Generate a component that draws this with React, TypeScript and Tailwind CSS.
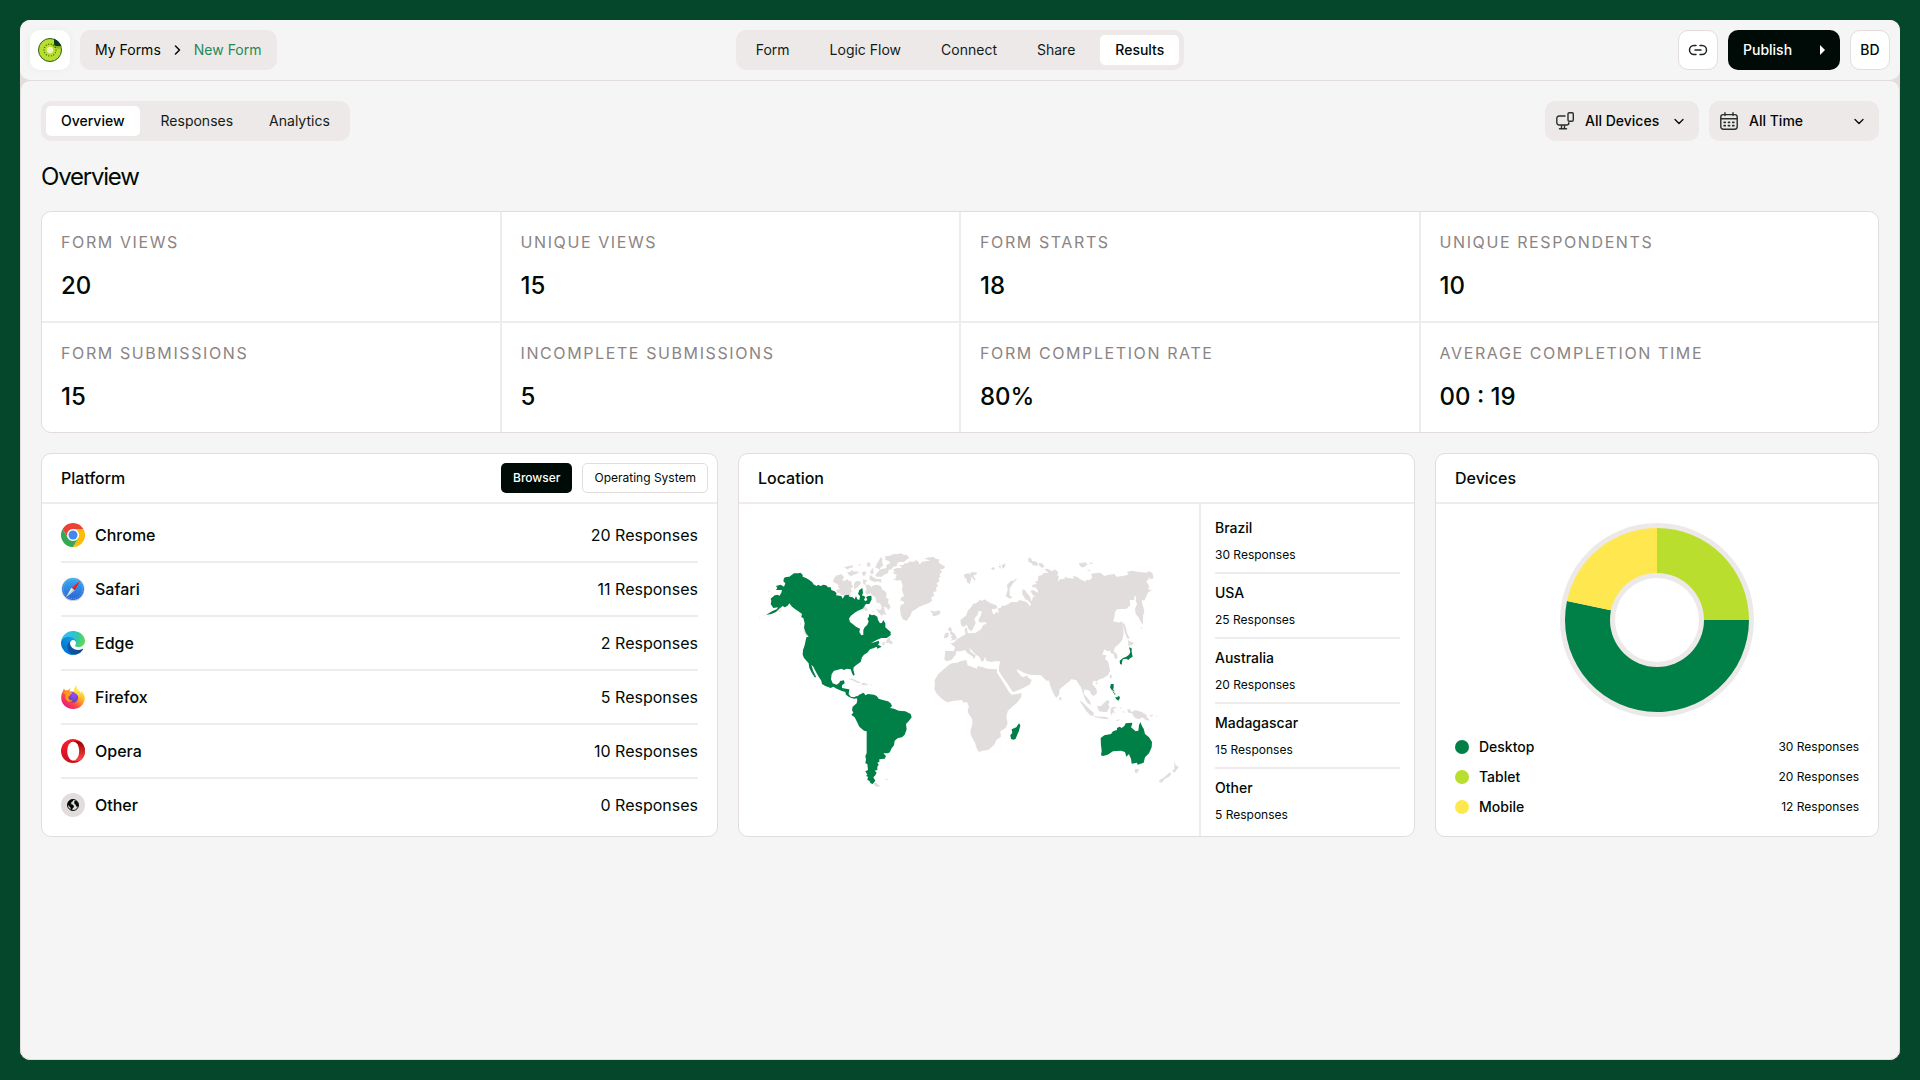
import type { ReactNode } from "react";
import clsx from "clsx";

const DARK = "text-[#000a06]";

function KiwiLogo() {
  const dots = Array.from({ length: 14 }, (_, i) => {
    const a = (i / 14) * Math.PI * 2;
    return { x: 12 + Math.cos(a) * 6, y: 12 + Math.sin(a) * 6 };
  });
  return (
    <svg viewBox="0 0 24 24" className="size-6" aria-hidden="true">
      <circle cx="12" cy="12" r="11.5" fill="#b9de2e" stroke="#2f5d1d" strokeWidth="1" />
      <path d="M16 0.8 A12 12 0 0 1 23.4 8.5 L18 8.2 Q16 8 16 6 Z" fill="#0d3b22" />
      <path d="M16 6 Q16 8 18 8.2 L23.4 8.5 L22 11 L17 10 Q14 9 14.5 6 Z" fill="#8fb91f" />
      {dots.map((d, i) => (
        <circle key={i} cx={d.x} cy={d.y} r="0.7" fill="#3f6b16" />
      ))}
      <circle cx="12" cy="12" r="3.2" fill="#edf5b0" />
    </svg>
  );
}

function Chevron({ className }: { className?: string }) {
  return (
    <svg viewBox="0 0 10 7" className={clsx("h-[7px] w-[10px]", className)} aria-hidden="true">
      <path d="M1 1.5 L5 5.5 L9 1.5" fill="none" stroke="#000a06" strokeWidth="1.3" strokeLinecap="round" strokeLinejoin="round" />
    </svg>
  );
}

function LinkIcon() {
  return (
    <svg viewBox="0 0 20 20" className="size-5" fill="none" stroke="#1d2622" strokeWidth="1.5" strokeLinecap="round" aria-hidden="true">
      <path d="M8 5.5 H6 a4.5 4.5 0 0 0 0 9 H8 M12 5.5 H14 a4.5 4.5 0 0 1 0 9 H12 M7 10 H13" />
    </svg>
  );
}

function DevicesIcon() {
  return (
    <svg viewBox="0 0 18 18" className="h-[18px] w-[18px]" fill="none" stroke="#28302d" strokeWidth="1.4" strokeLinecap="round" strokeLinejoin="round" aria-hidden="true">
      <rect x="12" y="0.7" width="5.3" height="8.6" rx="1.3" />
      <path d="M9 4 H3 a2.2 2.2 0 0 0 -2.2 2.2 V10.8 a2.2 2.2 0 0 0 2.2 2.2 H10.6 a2.2 2.2 0 0 0 2.2 -2.2 V12 M5.5 13 V16 M8.5 13 V16 M3.5 16.8 H10.5" />
    </svg>
  );
}

function CalendarIcon() {
  return (
    <svg viewBox="0 0 18 18" className="h-[18px] w-[18px]" fill="none" stroke="#28302d" strokeWidth="1.4" strokeLinecap="round" strokeLinejoin="round" aria-hidden="true">
      <rect x="0.8" y="2.6" width="16.4" height="14.6" rx="2.4" />
      <path d="M5 0.8 V3.6 M13 0.8 V3.6 M1 6.8 H17" />
      <path d="M4.2 10.3 H5.2 M8.5 10.3 H9.5 M12.8 10.3 H13.8 M4.2 13.7 H5.2 M8.5 13.7 H9.5 M12.8 13.7 H13.8" strokeWidth="1.8" />
    </svg>
  );
}

function ChromeIcon() {
  return (
    <svg viewBox="0 0 48 48" className="size-6" aria-hidden="true">
      <circle cx="24" cy="24" r="12" fill="#fff" />
      <path d="M24,12H44.7812a23.9939,23.9939,0,0,0-41.5639.0029L13.6079,30l.0093-.0024A11.9852,11.9852,0,0,1,24,12Z" fill="#ea4335" />
      <path d="M34.3913,30.0029,24.0007,48A23.994,23.994,0,0,0,44.78,12.0031H23.9989l-.0025.0093A11.985,11.985,0,0,1,34.3913,30.0029Z" fill="#fbbc05" />
      <path d="M13.6086,30.0031,3.218,12.006A23.994,23.994,0,0,0,24.0025,48L34.3931,30.0029l-.0067-.0068a11.9852,11.9852,0,0,1-20.7778.007Z" fill="#34a853" />
      <circle cx="24" cy="24" r="9" fill="#4285f4" />
    </svg>
  );
}

function SafariIcon() {
  return (
    <svg viewBox="0 0 24 24" className="size-6" aria-hidden="true">
      <defs>
        <linearGradient id="safari-bg" x1="0" y1="0" x2="0" y2="1">
          <stop offset="0" stopColor="#35adf2" />
          <stop offset="1" stopColor="#2d62d3" />
        </linearGradient>
      </defs>
      <circle cx="12" cy="12.8" r="11.2" fill="#b9bfc6" />
      <circle cx="12" cy="12" r="11.5" fill="#d5dde6" />
      <circle cx="12" cy="12" r="11" fill="url(#safari-bg)" />
      <circle cx="12" cy="12" r="9.6" fill="none" stroke="#a9d0f7" strokeWidth="1" strokeDasharray="0.5 1.5" />
      <path d="M18.8 4 L10.4 10.8 L13.6 13.2 Z" fill="#f0302c" />
      <path d="M5.2 20 L10.4 10.8 L13.6 13.2 Z" fill="#f3f3f3" />
      <path d="M18.8 4 L12 12 L13.6 13.2 Z" fill="#c0262a" />
      <path d="M5.2 20 L12 12 L13.6 13.2 Z" fill="#c4c9d0" />
    </svg>
  );
}

function EdgeIcon() {
  return (
    <svg viewBox="0 0 256 256" className="size-6" aria-hidden="true">
      <defs>
        <linearGradient id="edge-a" x1="63" y1="177" x2="241" y2="177" gradientUnits="userSpaceOnUse">
          <stop offset="0" stopColor="#0c59a4" />
          <stop offset="1" stopColor="#114a8b" />
        </linearGradient>
        <linearGradient id="edge-b" x1="157" y1="100" x2="46" y2="221" gradientUnits="userSpaceOnUse">
          <stop offset="0" stopColor="#1b9de2" />
          <stop offset="0.16" stopColor="#1595df" />
          <stop offset="0.67" stopColor="#0680d7" />
          <stop offset="1" stopColor="#0078d4" />
        </linearGradient>
        <radialGradient id="edge-c" cx="26" cy="46" r="230" gradientUnits="userSpaceOnUse">
          <stop offset="0" stopColor="#35c1f1" />
          <stop offset="0.4" stopColor="#2cc1e0" />
          <stop offset="0.7" stopColor="#36c9a0" />
          <stop offset="1" stopColor="#5fdb4f" />
        </radialGradient>
      </defs>
      <path fill="url(#edge-a)" d="M231 190.5c-3.4 1.8-6.9 3.4-10.5 4.7a101.5 101.5 0 0 1-35.9 6.5c-47.3 0-88.5-32.5-88.5-74.3a31.5 31.5 0 0 1 16.4-27.3c-42.8 1.8-53.8 46.4-53.8 72.5 0 74 68.1 81.4 82.8 81.4 7.9 0 19.8-2.3 27-4.6l1.3-.4a128.3 128.3 0 0 0 66.6-52.8 4 4 0 0 0-5.4-5.7z" />
      <path fill="url(#edge-b)" d="M105.7 241.4a79.2 79.2 0 0 1-22.7-21.3 80.7 80.7 0 0 1 29.5-120c3.2-1.5 8.5-4.1 15.6-4a32.4 32.4 0 0 1 25.7 13 31.9 31.9 0 0 1 6.3 18.7c0-.2 24.5-79.6-80-79.6-43.9 0-80 41.6-80 78.2a130.2 130.2 0 0 0 12.1 56 128 128 0 0 0 156.4 67 75.5 75.5 0 0 1-62.8-8z" />
      <path fill="url(#edge-c)" d="M152.3 148.9c-.8 1-3.3 2.5-3.3 5.7 0 2.6 1.7 5.1 4.7 7.2 14.4 10 41.5 8.7 41.6 8.7a59.6 59.6 0 0 0 30.3-8.4 61.4 61.4 0 0 0 30.4-52.9c.3-22.4-8-37.3-11.3-43.9C223.5 23.9 177.7 0 128 0A128 128 0 0 0 0 126.2c.5-36.5 36.8-66 80-66 3.5 0 23.5.3 42 10 16.3 8.6 24.9 18.9 30.8 29.2 6.2 10.7 7.3 24.2 7.3 29.6 0 5.4-2.7 13.4-7.8 19.9z" />
    </svg>
  );
}

function FirefoxIcon() {
  return (
    <svg viewBox="0 0 24 24" className="size-6" aria-hidden="true">
      <defs>
        <linearGradient id="fx-body" x1="20" y1="4" x2="4" y2="22" gradientUnits="userSpaceOnUse">
          <stop offset="0" stopColor="#fff44f" />
          <stop offset="0.35" stopColor="#ffa52a" />
          <stop offset="0.65" stopColor="#ff4a3f" />
          <stop offset="1" stopColor="#e31587" />
        </linearGradient>
        <linearGradient id="fx-flame" x1="15" y1="0" x2="20" y2="20" gradientUnits="userSpaceOnUse">
          <stop offset="0" stopColor="#fff44f" />
          <stop offset="0.5" stopColor="#ffd23a" />
          <stop offset="1" stopColor="#ff8a1f" stopOpacity="0" />
        </linearGradient>
        <radialGradient id="fx-globe" cx="0.6" cy="0.3" r="0.8">
          <stop offset="0" stopColor="#a04bf0" />
          <stop offset="1" stopColor="#4a41c4" />
        </radialGradient>
      </defs>
      <path fill="url(#fx-body)" d="M15.5 0 C14.5 2.5 16 4.5 18 6 C19 7 19.8 8 20 9 C20.4 8 20.3 6.8 20.1 6 C22.5 8 23.8 10.5 23.8 13 C23.8 19.2 18.7 24 12 24 C5.4 24 .2 19.2 .2 12.8 C.2 9.8 1 7.5 2.2 5.8 C2.2 4.9 2.5 4 3 3.5 C3.2 4.3 3.6 5 4.1 5.4 C5 5.1 6 5.1 7 5.3 C7.6 4.3 8.6 3.7 9.7 3.5 C9 4.3 8.6 5.3 8.7 6.3 C10 6.2 12 6.5 13 6.4 C13.5 4 13.8 1.5 15.5 0Z" />
      <circle cx="12" cy="12.2" r="5.2" fill="url(#fx-globe)" />
      <path fill="#ff9a1f" d="M2.2 7.5 C4 6 6 6.5 7.5 7.3 C8.8 7.2 10.3 7.4 11.5 7.8 C11.2 9 9.9 9.4 9 9.8 C8.8 10.3 8.9 10.7 9.3 11 C8.4 10.9 7.6 11.4 7.4 12.3 C7.4 14.5 9.3 15.8 11.8 15.6 C10.6 17.2 7.5 17.3 5.6 15.3 C4 13.5 4.3 11 5 9.5 C4 9 3 8.5 2.2 7.5Z" />
      <path fill="url(#fx-flame)" d="M15.5 0 C14.5 2.5 16 4.5 18 6 C19 7 19.8 8 20 9 C22 13 20.5 17 17.5 18.5 C18.5 15 18 11.5 16 9.5 C15 8.5 13.2 8 13 6.4 C13.5 4 13.8 1.5 15.5 0Z" />
    </svg>
  );
}

function OperaIcon() {
  return (
    <svg viewBox="0 0 24 24" className="size-6" aria-hidden="true">
      <defs>
        <linearGradient id="opera-a" x1="0" y1="0" x2="0" y2="1">
          <stop offset="0" stopColor="#ff1b2d" />
          <stop offset="1" stopColor="#c4111f" />
        </linearGradient>
        <linearGradient id="opera-b" x1="0" y1="0" x2="0" y2="1">
          <stop offset="0" stopColor="#9c0000" />
          <stop offset="1" stopColor="#ff4b4b" />
        </linearGradient>
      </defs>
      <circle cx="12" cy="12" r="12" fill="url(#opera-a)" />
      <path d="M8 4.5 C9.2 3 11 2.1 13 2.1 C15.6 2.1 17.8 2.3 20 3.1 A12 12 0 0 1 20 20.9 C17.8 21.8 15.6 21.9 13 21.9 C11 21.9 9.2 21 8 19.5Z" fill="url(#opera-b)" />
      <ellipse cx="12.2" cy="12" rx="6" ry="9.6" fill="#fff" />
    </svg>
  );
}

function GlobeIcon() {
  return (
    <span className="flex size-6 items-center justify-center rounded-full bg-[#e2dcdc]">
      <svg viewBox="0 0 12 12" className="size-3" aria-hidden="true">
        <circle cx="6" cy="6" r="5.5" fill="#e2dcdc" stroke="#000a06" strokeWidth="1" />
        <path d="M1 3 L3.5 0.7 L6.5 0.5 L5.8 2.2 L4.2 3.2 L4.600 4.4 L3.2 5 L5.5 5.600 L7 7 L6.600 8.600 L5.4 9.8 L5.3 11.5 L3.6 10.6 L3.4 8.6 L1 6Z M7.5 2 L9.500 2 L11 4 L11.3 6.500 L10.3 8 L9 7.200 L8.800 5.800 L7.600 5.200 L7.200 3.600Z" fill="#000a06" />
      </svg>
    </span>
  );
}

function WorldMap() {
  return (
    <svg viewBox="0 0 1290 780" className="w-full max-w-[430px]" role="img" aria-label="World map of responses">
      <g fill="#e2dddd">
        <path d="M238 120 L242 112 L248 106 L256 105 L260 102 L266 106 L270 112 L264 122 L272 122 L280 118 L286 124 L294 124 L292 132 L298 140 L290 146 L294 154 L288 160 L292 170 L280 164 L276 166 L262 166 L258 160 L250 158 L246 150 L258 147 L252 142 L254 136 L246 130 L238 127Z" />
        <path d="M270 82 L284 78 L296 76 L297 82 L288 84 L280 88Z M279 97 L288 96 L296 89 L300 96 L310 92 L308 102 L298 104 L292 109 L284 104Z M323 98 L330 94 L337 96 L334 106 L328 108Z M338 70 L346 66 L350 76 L346 80 L340 80Z M348 104 L356 110 L366 116 L382 118 L382 128 L372 124 L362 126 L346 119Z M300 130 L306 124 L314 122 L322 128 L316 136 L308 144 L300 148Z M326 118 L340 121 L334 128 L336 136 L328 132Z M352 88 L358 84 L358 92 L352 94Z M312 74 L322 72 L316 78Z M310 96 L316 96 L312 102Z M352 90 L360 96 L354 104 L348 96Z" />
        <path d="M394 48 L406 48 L416 43 L432 42 L440 40 L450 44 L458 44 L466 54 L456 60 L450 66 L436 66 L430 70 L428 78 L418 80 L412 88 L404 90 L402 100 L390 104 L384 110 L366 110 L364 104 L372 96 L380 88 L398 84 L396 76 L408 70 L406 64 L394 60Z M368 72 L374 62 L380 52 L386 56 L384 66 L388 76 L378 84 L378 90 L370 84 L364 84Z" />
        <path d="M334 134 L346 134 L352 142 L358 136 L368 134 L380 138 L386 150 L394 154 L398 162 L396 172 L404 178 L402 188 L410 200 L404 210 L396 202 L390 200 L392 214 L398 226 L388 222 L384 228 L372 216 L366 206 L378 210 L384 204 L378 190 L368 188 L364 172 L354 166 L350 160 L338 164 L334 156 L338 148Z" />
        <path d="M326 194 L334 200 L342 210 L336 213 L330 208 L326 214Z M352 216 L358 214 L360 218Z" />
        <path d="M416 88 L430 84 L444 84 L436 76 L446 76 L452 70 L460 70 L468 64 L478 66 L486 60 L494 66 L498 74 L502 66 L514 64 L528 62 L518 58 L510 56 L524 52 L540 51 L546 57 L556 58 L554 68 L574 80 L566 88 L558 88 L564 96 L556 104 L560 110 L554 114 L556 124 L548 130 L552 138 L546 144 L548 154 L538 156 L540 168 L532 172 L534 182 L524 190 L508 196 L496 200 L482 210 L474 214 L470 226 L464 234 L458 243 L446 238 L440 224 L438 206 L440 196 L452 190 L446 182 L440 184 L440 174 L450 168 L444 150 L446 136 L440 120 L430 122 L418 118 L428 114 L424 108 L430 104 L416 100 L422 94Z" />
        <path d="M528 214 L534 212 L540 215 L556 211 L560 218 L554 224 L542 229 L534 226 L536 220Z" />
        <path d="M394 308 L400 298 L408 290 L408 300 L416 306 L414 314 L404 308Z M384 310 L392 304 L392 314 L386 316Z" />
        <path d="M284 418 L292 415 L304 420 L318 427 L320 430 L308 428 L296 421Z M320 434 L326 429 L334 430 L344 434 L332 436Z M310 436 L316 436 L314 438Z M348 434 L354 434 L352 437Z" />
        <path d="M138 222 L142 224 L146 232 L142 230Z M148 268 L156 276 L161 286 L160 292 L152 282Z M138 246 L142 252 L140 258Z M42 150 L50 155 L46 157Z M14 232 L20 231 L16 234Z M28 227 L34 226 L30 230Z M72 212 L82 208 L78 216Z M46 182 L50 184 L46 186Z" />
        <path d="M392 718 L402 717 L400 721Z M360 728 L368 729 L372 734 L380 737 L370 741 L360 736Z" />
        <path d="M583 264 L590 261 L594 270 L592 276 L600 278 L606 288 L609 296 L600 300 L588 302 L596 296 L590 292 L594 286 L588 282 L588 274 L583 272Z M572 284 L576 278 L584 278 L584 288 L578 294 L569 294Z" />
      </g>
      <g fill="#007f47">
        <path d="M90 114 L96 111 L106 110 L112 106 L120 100 L134 100 L139 98 L146 104 L146 110 L156 114 L166 120 L174 126 L180 134 L188 138 L192 134 L200 138 L208 134 L216 136 L222 142 L230 142 L232 150 L242 154 L248 160 L246 166 L262 168 L266 176 L272 166 L284 164 L286 170 L296 172 L302 178 L306 168 L310 178 L316 180 L318 168 L312 162 L316 150 L325 144 L327 158 L324 166 L334 170 L330 180 L336 184 L340 178 L336 172 L342 168 L352 167 L353 178 L346 192 L336 192 L326 206 L312 212 L302 218 L290 228 L285 236 L288 246 L296 252 L306 260 L318 266 L316 276 L322 286 L328 284 L328 270 L332 262 L340 254 L344 244 L340 236 L344 232 L346 222 L354 226 L360 224 L370 230 L372 240 L378 250 L384 248 L388 240 L394 250 L394 262 L410 276 L410 286 L398 294 L382 294 L368 300 L350 310 L364 306 L374 302 L376 308 L372 314 L383 320 L370 326 L368 320 L360 324 L348 328 L340 338 L330 344 L324 352 L320 366 L308 374 L299 382 L298 390 L302 404 L298 407 L294 400 L290 388 L278 386 L270 390 L262 386 L250 390 L240 392 L233 402 L231 418 L236 430 L248 434 L256 428 L258 423 L270 421 L272 430 L264 436 L264 444 L276 446 L286 448 L284 462 L290 470 L300 472 L308 468 L312 474 L302 476 L292 474 L284 470 L276 464 L274 456 L262 452 L248 446 L238 440 L230 444 L214 438 L204 432 L202 422 L194 410 L186 396 L178 380 L172 374 L178 394 L187 412 L182 412 L174 400 L166 384 L164 370 L150 354 L146 344 L147 330 L152 316 L157 292 L164 290 L156 280 L150 264 L152 250 L148 234 L142 232 L144 222 L136 216 L124 208 L114 200 L106 190 L100 198 L92 202 L86 198 L76 206 L66 216 L52 222 L36 225 L54 214 L68 208 L72 202 L58 204 L50 192 L52 184 L50 176 L62 166 L72 164 L76 168 L82 158 L84 150 L66 150 L70 144 L66 138 L80 134 L90 140 L94 130 L88 124Z" />
        <path d="M308 470 L316 464 L328 458 L332 462 L334 466 L342 462 L360 464 L368 468 L374 476 L386 480 L402 484 L410 490 L414 498 L408 504 L420 506 L434 512 L454 514 L470 522 L473 532 L464 544 L456 552 L458 568 L452 584 L444 592 L432 594 L422 602 L420 616 L412 626 L408 636 L402 640 L388 640 L396 648 L392 656 L376 658 L376 666 L370 668 L374 674 L370 680 L370 690 L362 692 L368 698 L364 706 L358 712 L364 722 L356 732 L350 730 L346 722 L340 720 L342 710 L336 708 L340 704 L334 694 L342 690 L340 672 L334 670 L336 658 L334 648 L338 640 L338 574 L330 572 L316 560 L308 544 L302 532 L292 524 L298 518 L294 510 L296 500 L308 490 L310 480Z" />
      </g>
      <g transform="translate(615 0)">
        <g fill="#e2dddd">
          <path d="M15 103 L22 102 L28 98 L32 104 L36 97 L53 97 L53 103 L42 107 L50 118 L47 122 L38 110 L33 132 L25 128 L22 116 L16 112Z" />
          <path d="M4 240 L12 234 L22 226 L26 212 L36 202 L42 192 L54 188 L62 180 L70 182 L78 178 L84 184 L96 190 L112 196 L116 204 L104 208 L98 206 L100 216 L104 224 L112 216 L120 218 L116 206 L128 202 L128 196 L136 198 L148 192 L156 186 L176 186 L180 180 L196 184 L206 188 L212 199 L216 192 L208 182 L198 176 L190 162 L190 148 L198 150 L204 160 L212 168 L218 184 L222 170 L234 172 L224 168 L214 154 L222 150 L237 158 L236 150 L228 142 L220 142 L220 134 L234 132 L228 126 L236 122 L238 108 L250 104 L252 100 L268 98 L256 88 L266 86 L280 94 L286 88 L298 96 L294 106 L300 108 L296 126 L302 118 L318 116 L316 110 L328 114 L344 116 L342 108 L354 110 L364 118 L382 126 L380 120 L392 120 L400 112 L396 102 L406 100 L424 98 L436 108 L450 104 L466 102 L472 110 L492 108 L508 104 L504 96 L518 92 L540 96 L564 98 L568 93 L580 98 L584 114 L576 118 L566 110 L570 118 L562 124 L572 142 L566 146 L578 152 L568 156 L564 164 L556 182 L548 180 L550 192 L556 214 L552 228 L552 254 L544 244 L540 234 L530 222 L528 206 L534 192 L530 182 L532 170 L526 168 L526 180 L512 180 L514 196 L502 206 L474 208 L468 216 L466 234 L462 244 L474 246 L480 248 L486 244 L492 256 L494 282 L490 300 L480 312 L468 322 L464 334 L474 342 L476 354 L468 358 L464 342 L456 340 L454 332 L446 334 L436 328 L430 344 L442 346 L438 356 L448 366 L450 378 L454 392 L446 406 L434 414 L422 418 L414 424 L404 422 L400 432 L412 446 L414 460 L404 468 L396 462 L392 452 L376 448 L374 460 L382 470 L392 482 L397 496 L386 490 L378 478 L372 460 L366 442 L360 434 L352 420 L336 418 L332 424 L318 434 L302 448 L300 464 L292 474 L284 462 L274 438 L270 422 L262 422 L252 412 L246 406 L212 404 L194 398 L176 388 L174 394 L190 412 L206 406 L206 412 L218 420 L212 434 L184 448 L162 457 L156 448 L146 432 L130 410 L120 394 L120 382 L123 364 L106 364 L98 366 L82 362 L78 350 L74 362 L68 366 L62 352 L48 342 L38 330 L30 324 L36 336 L50 346 L48 354 L42 356 L42 350 L26 340 L18 330 L4 334 L-8 334 L-10 344 L-18 354 L-22 360 L-38 364 L-44 358 L-41 332 L-16 334 L-12 322 L-26 310 L-16 308 L-6 298 L4 292 L16 284 L20 282 L16 268 L24 262 L26 280 L36 280 L50 278 L66 268 L72 256 L84 250 L78 246 L62 248 L58 240 L66 226 L68 214 L58 214 L56 224 L46 236 L50 250 L42 266 L36 274 L28 266 L24 254 L12 262 L6 254Z" />
          <path d="M-32 376 L-22 370 L-6 368 L4 364 L22 360 L26 376 L42 382 L54 386 L56 378 L72 382 L86 386 L114 388 L114 398 L132 426 L150 456 L158 464 L188 460 L186 472 L174 488 L160 500 L146 514 L142 530 L146 550 L140 564 L124 574 L126 590 L112 600 L106 614 L88 630 L70 632 L60 636 L54 628 L48 608 L36 586 L34 572 L40 552 L40 538 L28 520 L26 510 L30 500 L24 486 L14 488 L8 480 L-14 482 L-36 487 L-52 476 L-66 462 L-74 448 L-72 430 L-74 422 L-62 402 L-46 388Z" />
          <path d="M173 114 L172 120 L162 130 L152 146 L152 166 L160 173 L152 176 L140 168 L146 150 L144 134 L156 122 L164 122Z" />
          <path d="M96 85 L104 81 L108 86 L102 91Z M118 78 L126 78 L124 86Z M128 76 L140 70 L138 80 L130 86Z M120 70 L126 72 L122 74Z" />
          <path d="M208 52 L217 56 L220 64 L230 64 L236 70 L236 78 L222 76 L218 70 L208 66Z M238 70 L250 70 L256 80 L248 84 L242 78Z M360 70 L380 67 L386 74 L376 80 L372 83 L362 78Z M390 68 L402 68 L400 72 L392 71Z M384 88 L392 90 L396 93 L388 92Z M544 262 L550 262 L548 266Z" />
          <path d="M488 244 L498 254 L502 268 L504 280 L512 294 L506 298 L498 280 L494 264Z M507 300 L516 306 L526 308 L518 316 L508 318Z" />
          <path d="M452 404 L458 404 L458 414 L454 416Z M408 428 L416 426 L414 434Z M300 470 L308 474 L306 481 L301 480Z" />
          <path d="M361 482 L370 486 L382 498 L392 508 L404 518 L404 528 L394 526 L382 514 L372 498Z M404 528 L420 530 L440 530 L452 538 L430 536 L408 532Z M414 498 L426 498 L434 490 L444 480 L452 484 L448 494 L452 502 L444 516 L434 516 L420 514Z M456 504 L464 500 L474 502 L462 508 L470 522 L462 516 L458 526 L454 518Z M484 500 L488 504 L484 508Z M488 514 L500 516 L492 518Z M470 540 L484 538 L476 544Z M504 508 L512 508 L518 516 L530 510 L548 516 L562 524 L564 532 L574 542 L560 540 L550 532 L540 538 L528 534 L518 520 L508 518Z M570 526 L584 524 L578 530Z M592 526 L596 528 L592 530Z" />
          <path d="M527 688 L540 686 L538 694 L532 700 L528 698Z M646 661 L649 674 L660 682 L652 690 L646 698 L640 694 L646 686Z M632 697 L637 703 L628 712 L618 716 L608 728 L600 726 L602 720 L616 712Z" />
        </g>
        <g fill="#007f47">
          <path d="M180 550 L184 556 L180 572 L170 596 L164 599 L156 597 L154 586 L160 578 L158 568 L172 562Z" />
          <path d="M510 322 L518 325 L518 336 L521 350 L514 354 L508 360 L502 356 L492 358 L490 362 L488 374 L483 372 L482 362 L492 354 L502 350 L510 344 L514 336Z" />
          <path d="M456 432 L464 432 L464 444 L462 448 L468 455 L458 450 L453 442Z M460 454 L465 456 L466 462Z M464 460 L470 461 L468 465Z M468 472 L474 472 L480 467 L483 474 L478 482 L472 478Z" />
          <path d="M425 594 L436 586 L456 582 L462 574 L474 570 L474 564 L482 560 L488 564 L496 558 L500 550 L518 548 L520 552 L516 562 L530 574 L538 572 L540 556 L544 546 L550 560 L554 566 L558 582 L570 592 L579 606 L578 622 L570 640 L558 652 L554 668 L536 674 L534 668 L518 671 L516 656 L512 648 L510 642 L502 650 L498 636 L486 632 L462 634 L446 644 L432 648 L426 646 L428 632 L426 616Z" />
        </g>
      </g>
    </svg>
  );
}

const TAU = Math.PI * 2;

function wedge(from: number, to: number, r: number) {
  const point = (t: number) => `${97 + r * Math.sin(t * TAU)} ${97 - r * Math.cos(t * TAU)}`;
  return `M97 97 L${point(from)} A${r} ${r} 0 ${to - from > 0.5 ? 1 : 0} 1 ${point(to)} Z`;
}

function Donut() {
  return (
    <svg viewBox="0 0 194 194" className="size-[194px]" role="img" aria-label="Responses by device">
      <circle cx="97" cy="97" r="97" fill="#ede9e8" />
      <path d={wedge(0, 0.25, 92)} fill="#b9de2e" />
      <path d={wedge(0.25, 0.783, 92)} fill="#007f47" />
      <path d={wedge(0.783, 1, 92)} fill="#ffe84f" />
      <circle cx="97" cy="97" r="47" fill="#ede9e8" />
      <circle cx="97" cy="97" r="42" fill="#fff" />
    </svg>
  );
}

function Tabs({ items, active, className, label }: { items: string[]; active: string; className?: string; label: string }) {
  return (
    <nav aria-label={label} className={clsx("flex h-10 items-center rounded-[10px] bg-[#ede9e8] p-[5px]", className)}>
      {items.map((item) => (
        <button
          key={item}
          type="button"
          className={clsx("h-[30px] rounded-[5px] px-[15px] text-sm whitespace-nowrap", item === active ? "bg-white font-medium" : "text-[#121b17]")}
        >
          {item}
        </button>
      ))}
    </nav>
  );
}

function Filter({ label, value, icon, className }: { label: string; value: string; icon: ReactNode; className: string }) {
  return (
    <div className={clsx("relative h-10 rounded-[10px] bg-[#ede9e8]", className)}>
      <span className="pointer-events-none absolute inset-y-0 left-[11px] flex items-center">{icon}</span>
      <select aria-label={label} className="h-full w-full appearance-none rounded-[10px] bg-transparent pr-8 pl-10 text-sm font-medium">
        <option>{value}</option>
      </select>
      <Chevron className="pointer-events-none absolute top-[17px] right-[15px]" />
    </div>
  );
}

function Panel({ title, actions, children }: { title: string; actions?: ReactNode; children: ReactNode }) {
  return (
    <section className="flex flex-col overflow-hidden rounded-[10px] border border-[#e2dcdc] bg-white">
      <header className="flex h-[50px] shrink-0 items-center justify-between border-b-2 border-[#eeecec] pr-[9px] pl-[19px]">
        <h2 className="text-base font-medium">{title}</h2>
        {actions}
      </header>
      {children}
    </section>
  );
}

const stats = [
  ["FORM VIEWS", "20"],
  ["UNIQUE VIEWS", "15"],
  ["FORM STARTS", "18"],
  ["UNIQUE RESPONDENTS", "10"],
  ["FORM SUBMISSIONS", "15"],
  ["INCOMPLETE SUBMISSIONS", "5"],
  ["FORM COMPLETION RATE", "80%"],
  ["AVERAGE COMPLETION TIME", "00 : 19"],
];

const browsers: [string, number, ReactNode][] = [
  ["Chrome", 20, <ChromeIcon />],
  ["Safari", 11, <SafariIcon />],
  ["Edge", 2, <EdgeIcon />],
  ["Firefox", 5, <FirefoxIcon />],
  ["Opera", 10, <OperaIcon />],
  ["Other", 0, <GlobeIcon />],
];

const countries: [string, number][] = [
  ["Brazil", 30],
  ["USA", 25],
  ["Australia", 20],
  ["Madagascar", 15],
  ["Other", 5],
];

const devices: [string, number, string][] = [
  ["Desktop", 30, "bg-[#007f47]"],
  ["Tablet", 20, "bg-[#b9de2e]"],
  ["Mobile", 12, "bg-[#ffe84f]"],
];

export default function App() {
  return (
    <div className={clsx("flex min-h-screen flex-col bg-[#05472a] p-5 font-['Inter',sans-serif]", DARK)}>
      <div className="flex grow flex-col rounded-[10px] bg-[#e2dcdc]">
        <header className="grid h-[60px] grid-cols-[1fr_auto_1fr] items-center rounded-[10px] bg-[#f5f5f5] px-[10px]">
          <div className="flex items-center gap-[10px]">
            <a href="#home" aria-label="Home" className="flex size-10 items-center justify-center rounded-[10px] bg-white shadow-[0_0_10px_rgba(0,0,0,0.04)]">
              <KiwiLogo />
            </a>
            <nav aria-label="Breadcrumb" className="flex h-10 items-center rounded-[10px] bg-[#ede9e8] px-[15px] text-sm">
              <a href="#forms">My Forms</a>
              <svg viewBox="0 0 7 10" className="mx-[13px] h-[10px] w-[7px]" aria-hidden="true">
                <path d="M1.5 1 L5.5 5 L1.5 9" fill="none" stroke="#000a06" strokeWidth="1.5" strokeLinecap="round" strokeLinejoin="round" />
              </svg>
              <a href="#new-form" className="text-[#1f8a57]">New Form</a>
            </nav>
          </div>
          <Tabs label="Form sections" items={["Form", "Logic Flow", "Connect", "Share", "Results"]} active="Results" className="gap-[10px]" />
          <div className="flex items-center justify-end gap-[10px]">
            <button type="button" aria-label="Copy link" className="flex size-10 items-center justify-center rounded-[10px] border border-[#e2dcdc] bg-white">
              <LinkIcon />
            </button>
            <button type="button" className="flex h-10 w-28 items-center justify-between rounded-[10px] bg-[#000a06] px-[15px] text-sm font-medium text-white">
              Publish
              <svg viewBox="0 0 5 10" className="h-[10px] w-[5px]" aria-hidden="true">
                <path d="M0 0 L5 5 L0 10Z" fill="#fff" />
              </svg>
            </button>
            <button type="button" aria-label="Account BD" className="size-10 rounded-[10px] border border-[#e2dcdc] bg-white text-sm font-medium">
              BD
            </button>
          </div>
        </header>

        <main className="flex grow flex-col gap-5 rounded-[10px] border border-[#e2dcdc] bg-[#f5f5f5] p-5">
          <div className="flex items-center justify-between">
            <Tabs label="Result views" items={["Overview", "Responses", "Analytics"]} active="Overview" className="gap-[6px]" />
            <div className="flex gap-[10px]">
              <Filter label="Devices" value="All Devices" icon={<DevicesIcon />} className="w-[154px]" />
              <Filter label="Time range" value="All Time" icon={<CalendarIcon />} className="w-[170px]" />
            </div>
          </div>

          <h1 className="pt-[2px] text-2xl leading-7 tracking-tighter">Overview</h1>

          <dl className="grid grid-cols-4 gap-[2px] overflow-hidden rounded-[10px] border border-[#e2dcdc] bg-[#eeecec]">
            {stats.map(([name, value]) => (
              <div key={name} className="flex flex-col gap-[19px] bg-white px-[19px] py-5">
                <dt className="text-base leading-5 tracking-widest text-[#8c8484]">{name}</dt>
                <dd className="text-2xl leading-[30px] font-medium">{value}</dd>
              </div>
            ))}
          </dl>

          <div className="grid grid-cols-[677fr_677fr_444fr] gap-5">
            <Panel
              title="Platform"
              actions={
                <div className="flex gap-[10px]">
                  <button type="button" className="h-[30px] rounded-[5px] bg-[#000a06] px-3 text-xs font-medium text-white">Browser</button>
                  <button type="button" className="h-[30px] rounded-[5px] border border-[#e2dcdc] px-[11px] text-xs">Operating System</button>
                </div>
              }
            >
              <ul className="divide-y-2 divide-[#eeecec] px-[19px] py-[5px]">
                {browsers.map(([name, count, icon]) => (
                  <li key={name} className="box-content flex h-[52px] items-center gap-[10px]">
                    {icon}
                    <span className="font-medium">{name}</span>
                    <span className="ml-auto">{count} Responses</span>
                  </li>
                ))}
              </ul>
            </Panel>

            <Panel title="Location">
              <div className="flex grow">
                <div className="flex grow items-center justify-center px-3">
                  <WorldMap />
                </div>
                <ul className="w-[215px] shrink-0 divide-y-2 divide-[#eeecec] border-l-2 border-[#eeecec] px-[14px] pt-[5px]">
                  {countries.map(([name, count]) => (
                    <li key={name} className="box-content flex h-[63px] flex-col justify-end gap-[7px] pb-0">
                      <span className="text-sm leading-5 font-medium">{name}</span>
                      <span className="mb-[7px] text-xs leading-5">{count} Responses</span>
                    </li>
                  ))}
                </ul>
              </div>
            </Panel>

            <Panel title="Devices">
              <div className="flex grow flex-col items-center justify-between px-[19px] py-[19px]">
                <Donut />
                <ul className="flex w-full flex-col gap-[10px]">
                  {devices.map(([name, count, swatch]) => (
                    <li key={name} className="flex items-center gap-[10px]">
                      <span className={clsx("size-[14px] rounded-full", swatch)} />
                      <span className="text-sm leading-5 font-medium">{name}</span>
                      <span className="ml-auto text-xs">{count} Responses</span>
                    </li>
                  ))}
                </ul>
              </div>
            </Panel>
          </div>
        </main>
      </div>
    </div>
  );
}
